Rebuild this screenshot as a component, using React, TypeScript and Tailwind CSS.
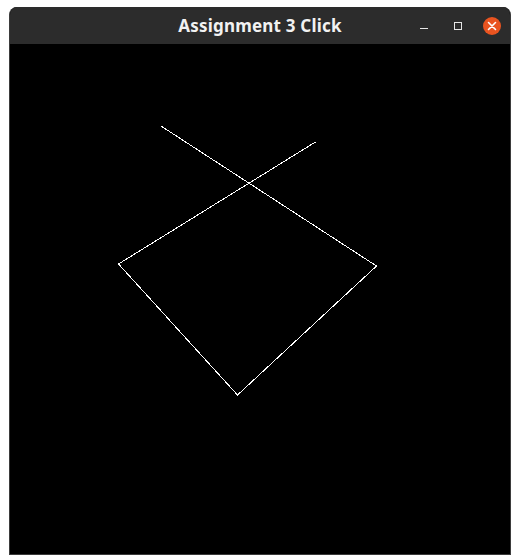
export default function App() {
  return (
    <div className="w-[520px] h-[555px] bg-white pt-[7px] px-[9px] overflow-hidden">
      <div className="flex h-[548px] flex-col overflow-hidden rounded-t-[8px] border-x border-b border-[#3b3b3b] bg-black">
        {/* Title bar */}
        <div className="relative flex h-[37px] shrink-0 items-center justify-center bg-[#2c2c2c]">
          <span
            className="text-[17px] font-bold tracking-[0.2px] text-[#f2f2f2]"
            style={{ fontFamily: '"Noto Sans", "Open Sans", sans-serif' }}
          >
            Assignment 3 Click
          </span>
          <div className="absolute right-[1px] top-0 flex h-full items-center">
            <div className="flex w-[34px] justify-center pt-[5px]">
              <div className="h-px w-[8px] bg-[#e6e6e6]" />
            </div>
            <div className="flex w-[34px] justify-center">
              <div className="h-[8px] w-[8px] border border-[#e6e6e6]" />
            </div>
            <div className="flex w-[34px] justify-center">
              <div className="flex h-[18px] w-[18px] items-center justify-center rounded-full bg-[#e95420]">
                <svg width="10" height="10" viewBox="0 0 10 10">
                  <path d="M1.5 1.5 L8.5 8.5 M8.5 1.5 L1.5 8.5" stroke="#ffffff" strokeWidth="1.6" strokeLinecap="round" />
                </svg>
              </div>
            </div>
          </div>
        </div>
        {/* Canvas */}
        <div className="flex-1 bg-black">
          <svg width="500" height="510" viewBox="10 44 500 510" className="block">
            <polyline
              points="161,126 376.5,266 237.5,395 118.5,264 315.5,142"
              fill="none"
              stroke="#ffffff"
              strokeWidth="1"
              shapeRendering="crispEdges"
            />
          </svg>
        </div>
      </div>
    </div>
  );
}
